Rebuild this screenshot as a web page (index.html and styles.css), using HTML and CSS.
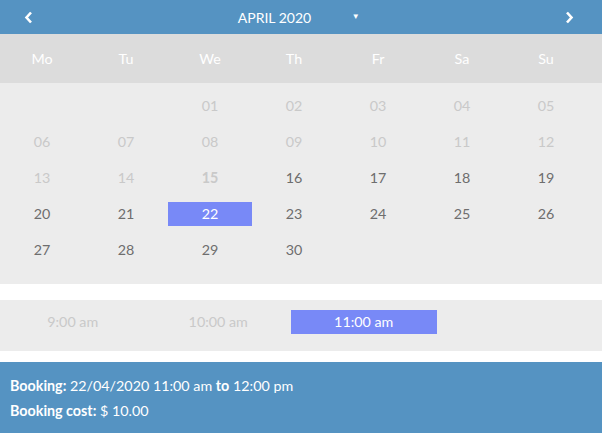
FILE: index.html
```html
<!DOCTYPE html>
<html lang="en">
<head>
  <meta charset="UTF-8" />
  <title>Booking calendar</title>
  <link rel="stylesheet" href="styles.css">
</head>
<body>
  <div class="booking">
    <div class="month-bar">
      <span class="nav">
        <svg width="9" height="13" viewBox="0 0 9 13"><polyline points="7,1.5 2.5,6.5 7,11.5" fill="none" stroke="#fff" stroke-width="2.6"/></svg>
      </span>
      <span class="month">APRIL 2020<span class="caret">▼</span></span>
      <span class="nav">
        <svg width="9" height="13" viewBox="0 0 9 13"><polyline points="2,1.5 6.5,6.5 2,11.5" fill="none" stroke="#fff" stroke-width="2.6"/></svg>
      </span>
    </div>

    <div class="weekdays">
      <span>Mo</span><span>Tu</span><span>We</span><span>Th</span><span>Fr</span><span>Sa</span><span>Su</span>
    </div>

    <div class="days">
      <span></span><span></span>
      <span class="off">01</span><span class="off">02</span><span class="off">03</span><span class="off">04</span><span class="off">05</span>
      <span class="off">06</span><span class="off">07</span><span class="off">08</span><span class="off">09</span><span class="off">10</span><span class="off">11</span><span class="off">12</span>
      <span class="off">13</span><span class="off">14</span><span class="off today">15</span><span>16</span><span>17</span><span>18</span><span>19</span>
      <span>20</span><span>21</span><span class="picked">22</span><span>23</span><span>24</span><span>25</span><span>26</span>
      <span>27</span><span>28</span><span>29</span><span>30</span>
    </div>

    <div class="slots">
      <span class="off">9:00 am</span>
      <span class="off">10:00 am</span>
      <span class="picked">11:00 am</span>
    </div>

    <div class="summary">
      <p><b>Booking:</b> 22/04/2020 11:00 am <b>to</b> 12:00 pm</p>
      <p><b>Booking cost:</b> $ 10.00</p>
    </div>
  </div>
</body>
</html>
```

FILE: styles.css
```css
:root {
  --blau: #5593c2;
  --lila: #7889f7;
  --grau: #6e6e6e;
  --hell: #c9c9c9;
}

* {
  box-sizing: border-box;
  margin: 0;
  padding: 0;
}

body {
  font-family: Lato, sans-serif;
  font-size: 14.3px;
  color: var(--grau);
  background: #ffffff;
}

.month-bar {
  height: 34px;
  background: var(--blau);
  color: #ffffff;
  display: flex;
  align-items: center;
  justify-content: space-between;
  padding: 0 28px 0 24px;
}

.nav {
  display: flex;
}

.month {
  position: relative;
  font-size: 14px;
  margin-left: -49px;
}

.caret {
  position: absolute;
  left: 114px;
  top: 2px;
  font-size: 8px;
}

.weekdays,
.days {
  display: grid;
  grid-template-columns: repeat(7, 84px);
}

.weekdays {
  height: 49px;
  background: #dcdcdc;
  color: #ffffff;
  align-items: center;
}

.weekdays span,
.days span {
  text-align: center;
}

.days {
  background: #ececec;
  width: 100%;
  padding: 11px 0 22px;
  grid-auto-rows: 24px;
  row-gap: 12px;
}

.days span {
  line-height: 24px;
}

.off {
  color: var(--hell);
}

.today {
  font-weight: bold;
}

.picked {
  background: var(--lila);
  color: #ffffff;
}

.slots {
  margin-top: 16px;
  height: 51px;
  background: #ececec;
  display: grid;
  grid-template-columns: repeat(4, 145.5px);
  align-items: start;
  padding-top: 10px;
}

.slots span {
  text-align: center;
  line-height: 24px;
}

.summary {
  margin-top: 11px;
  height: 71px;
  background: var(--blau);
  color: #ffffff;
  padding: 11px 10px;
}

.summary p {
  line-height: 25px;
}
```
